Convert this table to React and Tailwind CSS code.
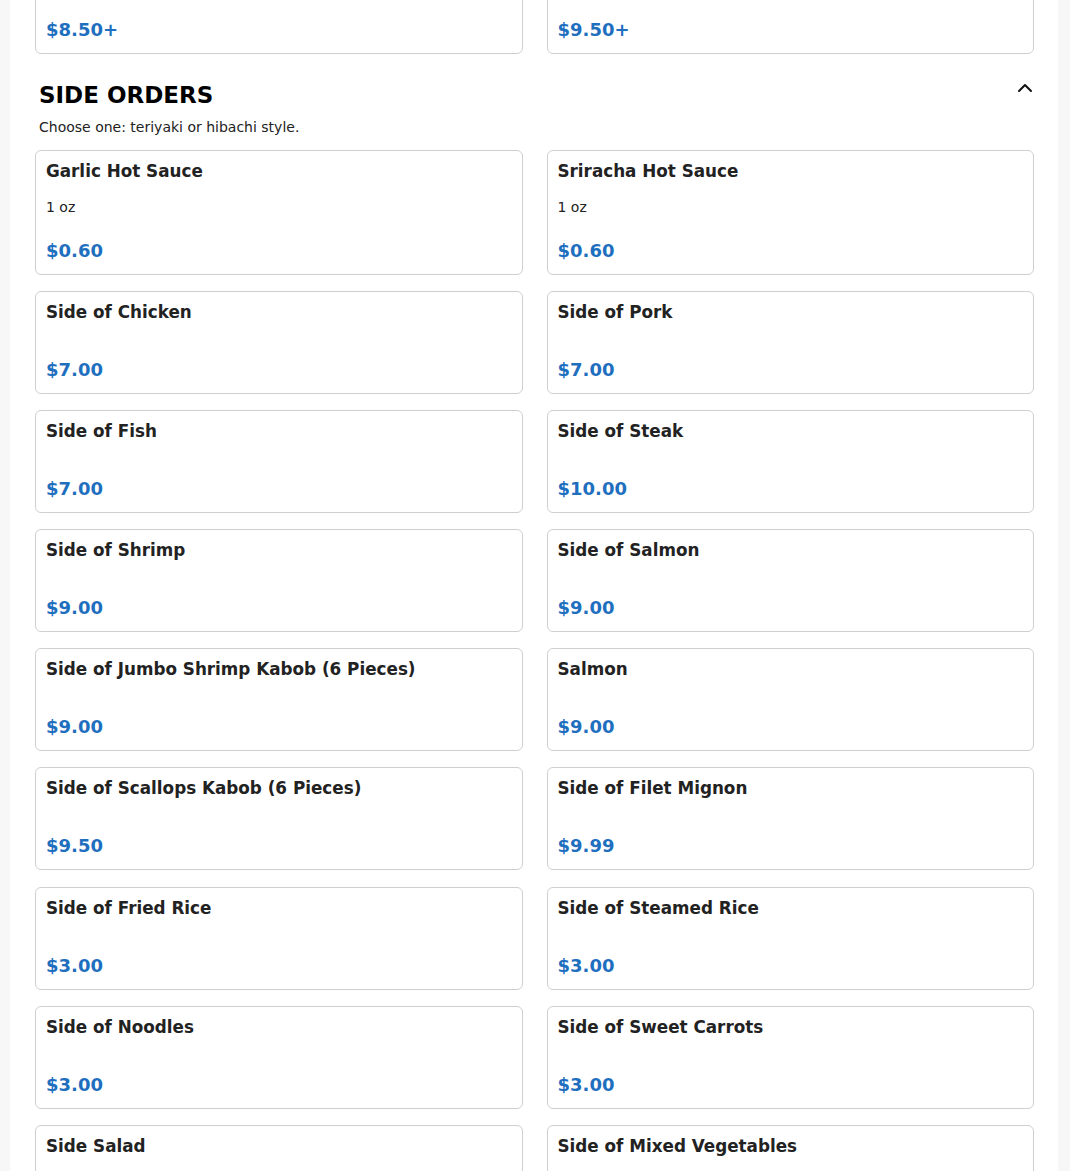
import React from "react";

const items = [
  { name: "Garlic Hot Sauce", desc: "1 oz", price: "$0.60" },
  { name: "Sriracha Hot Sauce", desc: "1 oz", price: "$0.60" },
  { name: "Side of Chicken", price: "$7.00" },
  { name: "Side of Pork", price: "$7.00" },
  { name: "Side of Fish", price: "$7.00" },
  { name: "Side of Steak", price: "$10.00" },
  { name: "Side of Shrimp", price: "$9.00" },
  { name: "Side of Salmon", price: "$9.00" },
  { name: "Side of Jumbo Shrimp Kabob (6 Pieces)", price: "$9.00" },
  { name: "Salmon", price: "$9.00" },
  { name: "Side of Scallops Kabob (6 Pieces)", price: "$9.50" },
  { name: "Side of Filet Mignon", price: "$9.99" },
  { name: "Side of Fried Rice", price: "$3.00" },
  { name: "Side of Steamed Rice", price: "$3.00" },
  { name: "Side of Noodles", price: "$3.00" },
  { name: "Side of Sweet Carrots", price: "$3.00" },
  { name: "Side Salad", price: "$3.00" },
  { name: "Side of Mixed Vegetables", price: "$3.00" },
];

function Card({ name, desc, price }) {
  return (
    <div className="flex flex-col rounded-[6px] border border-[#cfcfcf] bg-white pt-[10px] pb-[11px] px-[10px]">
      <div className="text-[16.8px] leading-[20px] font-bold text-[#222222]">{name}</div>
      {desc && <div className="mt-[16px] text-[14px] leading-[20px] text-[#222222]">{desc}</div>}
      <div
        className={
          desc
            ? "mt-[22px] text-[18px] leading-[24px] font-bold text-[#1f6fbf]"
            : "mt-[36px] text-[18px] leading-[24px] font-bold text-[#1f6fbf]"
        }
      >
        {price}
      </div>
    </div>
  );
}

export default function App() {
  return (
    <div className="min-h-screen bg-[#f7f7f7] pl-[10px] overflow-hidden font-['DejaVu_Sans',sans-serif]">
      <div className="w-[1048px] bg-white pl-[25px] pr-[24px] pb-10 min-h-screen">
        <div className="grid grid-cols-2 gap-x-[24px] mt-[-49px]">
          <Card name="Hibachi Chicken Lunch" price="$8.50+" />
          <Card name="Hibachi Steak Lunch" price="$9.50+" />
        </div>
        <div className="mt-[28px] flex items-start justify-between pl-[4px]">
          <h2 className="text-[23px] leading-[26px] font-bold text-black">SIDE ORDERS</h2>
          <svg width="16" height="10" viewBox="0 0 16 10" className="mt-[1px] mr-[1px]" fill="none" stroke="#111" strokeWidth="2" strokeLinecap="round" strokeLinejoin="round">
            <polyline points="2,8 8,2 14,8" />
          </svg>
        </div>
        <p className="mt-[9px] pl-[4px] text-[14px] leading-[20px] text-[#222222]">Choose one: teriyaki or hibachi style.</p>
        <div className="mt-[13px] grid grid-cols-2 gap-x-[24px] gap-y-[16.1px]">
          {items.map((it) => (
            <Card key={it.name} {...it} />
          ))}
        </div>
      </div>
    </div>
  );
}
